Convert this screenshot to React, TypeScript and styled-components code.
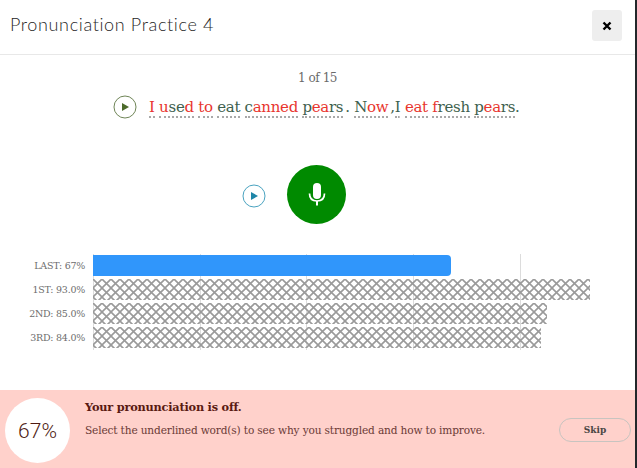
import React from 'react'
import styled, { createGlobalStyle } from 'styled-components'

const GlobalStyle = createGlobalStyle`
  html, body {
    margin: 0;
    padding: 0;
    height: 468px;
    overflow: hidden;
    background: #23282b;
  }
`

const hatchTile = encodeURIComponent(
  '<svg xmlns="http://www.w3.org/2000/svg" width="9" height="9" viewBox="0 0 9 9">' +
  '<path stroke="#9a9a9a" stroke-width="1.6" fill="none" d="M-1 -1L10 10M10 -1L-1 10"/>' +
  '</svg>'
)

const Modal = styled.div`
  width: 635px;
  height: 468px;
  background: #ffffff;
  display: flex;
  flex-direction: column;
  font-family: "DejaVu Serif", "Liberation Serif", serif;
`

const Header = styled.header`
  height: 54px;
  flex: none;
  box-sizing: content-box;
  border-bottom: 1px solid #e8e8e8;
  display: flex;
  align-items: center;
  justify-content: space-between;
  padding: 0 13px 0 10px;
`

const Title = styled.h1`
  margin: 0 0 6px;
  font-family: Lato, "Open Sans", sans-serif;
  font-size: 18px;
  font-weight: 300;
  letter-spacing: 0.64px;
  color: #1f1f1f;
`

const CloseButton = styled.button`
  width: 30px;
  height: 31px;
  margin-bottom: 3px;
  border: 0;
  border-radius: 3px;
  background: #eeeeee;
  display: flex;
  align-items: center;
  justify-content: center;
  padding: 0;
`

const Body = styled.main`
  flex: 1;
  display: flex;
  flex-direction: column;
  align-items: center;
`

const Counter = styled.div`
  margin-top: 15px;
  height: 16px;
  line-height: 16px;
  font-size: 12px;
  letter-spacing: -0.45px;
  color: #6a6a6a;
`

const SentenceRow = styled.div`
  margin-top: 8px;
  height: 26px;
  width: 100%;
  display: flex;
  align-items: center;
  padding-left: 113px;
  gap: 12px;
  box-sizing: border-box;
`

const Sentence = styled.div`
  font-size: 15px;
  letter-spacing: -0.3px;
  line-height: 20px;
  white-space: pre;
  color: #3e5f4e;
`

const Word = styled.span`
  border-bottom: 2px dotted #a8a8a8;
`

const Bad = styled.span`
  color: #e8352e;
`

const Punct = styled.span`
  margin-left: 2px;
`

const Recorder = styled.div`
  margin-top: 45px;
  width: 100%;
  display: flex;
  align-items: center;
  padding-left: 242px;
  box-sizing: border-box;
  gap: 21px;
`

const IconButton = styled.span`
  display: block;
  line-height: 0;
  margin-top: 3px;
`

const MicButton = styled.button`
  width: 59px;
  height: 59px;
  border: 0;
  padding: 0;
  border-radius: 50%;
  background: #008a00;
  display: flex;
  align-items: center;
  justify-content: center;
`

const Chart = styled.section`
  position: relative;
  margin-top: 31px;
  width: 100%;
  display: flex;
  flex-direction: column;
  gap: 3px;
`

const GridLine = styled.i<{ $x: number }>`
  position: absolute;
  top: -1px;
  bottom: -2px;
  left: ${p => p.$x}px;
  width: 1px;
  background: #dcdcdc;
`

const ChartRow = styled.div`
  position: relative;
  display: flex;
  align-items: center;
  height: 21px;
`

const RowLabel = styled.div`
  width: 85px;
  text-align: right;
  font-size: 9.5px;
  letter-spacing: -0.25px;
  color: #6d6d6d;
`

const Track = styled.div`
  margin-left: 8px;
  flex: 1;
  height: 21px;
`

const Bar = styled.div<{ $current?: boolean }>`
  height: 100%;
  ${p => p.$current
    ? 'background: #3096fb; border-radius: 0 4px 4px 0;'
    : `background-image: url("data:image/svg+xml,${hatchTile}");`}
`

const Footer = styled.footer`
  height: 78px;
  flex: none;
  background: #ffd1cb;
  display: flex;
  padding-left: 5px;
  padding-right: 4px;
  box-sizing: border-box;
  color: #5d2019;
`

const ScoreCircle = styled.div`
  width: 65px;
  height: 65px;
  margin-top: 8px;
  flex: none;
  border-radius: 50%;
  background: #ffffff;
  display: flex;
  align-items: center;
  justify-content: center;
  font-family: Roboto, sans-serif;
  font-size: 21px;
  font-weight: 300;
  color: #4e1a12;
`

const FooterText = styled.div`
  margin-left: 15px;
  flex: 1;
  padding-top: 9px;
`

const FooterTitle = styled.div`
  font-size: 11.3px;
  font-weight: 700;
  line-height: 16px;
  letter-spacing: -0.2px;
  color: #5a1a12;
`

const FooterHint = styled.div`
  margin-top: 7px;
  font-size: 10.6px;
  line-height: 16px;
  letter-spacing: -0.16px;
  color: #6b3a36;
`

const SkipButton = styled.button`
  width: 72px;
  height: 24px;
  margin-top: 28px;
  flex: none;
  border: 1px solid #c8c4c0;
  border-radius: 12px;
  background: transparent;
  font-family: inherit;
  font-size: 9px;
  font-weight: 700;
  color: #4a4644;
  padding: 0;
`

const PlayIcon: React.FC<{ color: string; ring: string }> = ({ color, ring }) => (
  <svg width="24" height="24" viewBox="0 0 24 24">
    <circle cx="12" cy="12" r="11" fill="none" stroke={ring} strokeWidth="1" />
    <path d="M9 8 L16 12 L9 16 Z" fill={color} />
  </svg>
)

const MicIcon = () => (
  <svg width="18" height="23" viewBox="0 0 18 23">
    <rect x="5" y="0" width="8" height="16" rx="4" fill="#ffffff" />
    <path d="M1.5 10.5 C1.5 15.5 4.5 18 9 18 C13.5 18 16.5 15.5 16.5 10.5" fill="none" stroke="#ffffff" strokeWidth="1.7" />
    <rect x="8" y="18" width="2" height="4.5" fill="#ffffff" />
  </svg>
)

const CloseIcon = () => (
  <svg width="10" height="10" viewBox="0 0 10 10">
    <path d="M1.5 1.5 L8.5 8.5 M8.5 1.5 L1.5 8.5" stroke="#000000" strokeWidth="2.4" />
  </svg>
)

const rows = [
  { label: 'LAST: 67%', width: 358, current: true },
  { label: '1ST: 93.0%', width: 497 },
  { label: '2ND: 85.0%', width: 454 },
  { label: '3RD: 84.0%', width: 448 },
]

const gridLines = [93, 200, 306, 413, 520]

export default function App() {
  return (
    <>
      <GlobalStyle />
      <Modal>
        <Header>
          <Title>Pronunciation Practice 4</Title>
          <CloseButton aria-label="Close"><CloseIcon /></CloseButton>
        </Header>
        <Body>
          <Counter>1 of 15</Counter>
          <SentenceRow>
            <PlayIcon color="#4d6b2b" ring="#6f8557" />
            <Sentence>
              <Word><Bad>I</Bad></Word>{' '}
              <Word><Bad>u</Bad>se<Bad>d</Bad></Word>{' '}
              <Word><Bad>to</Bad></Word>{' '}
              <Word>eat</Word>{' '}
              <Word>c<Bad>anned</Bad></Word>{' '}
              <Word>p<Bad>ea</Bad>rs</Word>
              <Punct>. </Punct>
              <Word>N<Bad>ow</Bad></Word>
              <Punct>,</Punct>
              <Word>I</Word>{' '}
              <Word><Bad>eat</Bad></Word>{' '}
              <Word><Bad>f</Bad>resh</Word>{' '}
              <Word>p<Bad>ea</Bad>rs</Word>
              <span>.</span>
            </Sentence>
          </SentenceRow>
          <Recorder>
            <IconButton><PlayIcon color="#1f86a8" ring="#4aa3c0" /></IconButton>
            <MicButton aria-label="Record"><MicIcon /></MicButton>
          </Recorder>
          <Chart>
            {gridLines.map(x => <GridLine key={x} $x={x} />)}
            {rows.map(row => (
              <ChartRow key={row.label}>
                <RowLabel>{row.label}</RowLabel>
                <Track>
                  <Bar $current={row.current} style={{ width: row.width }} />
                </Track>
              </ChartRow>
            ))}
          </Chart>
        </Body>
        <Footer>
          <ScoreCircle>67%</ScoreCircle>
          <FooterText>
            <FooterTitle>Your pronunciation is off.</FooterTitle>
            <FooterHint>Select the underlined word(s) to see why you struggled and how to improve.</FooterHint>
          </FooterText>
          <SkipButton>Skip</SkipButton>
        </Footer>
      </Modal>
    </>
  )
}
